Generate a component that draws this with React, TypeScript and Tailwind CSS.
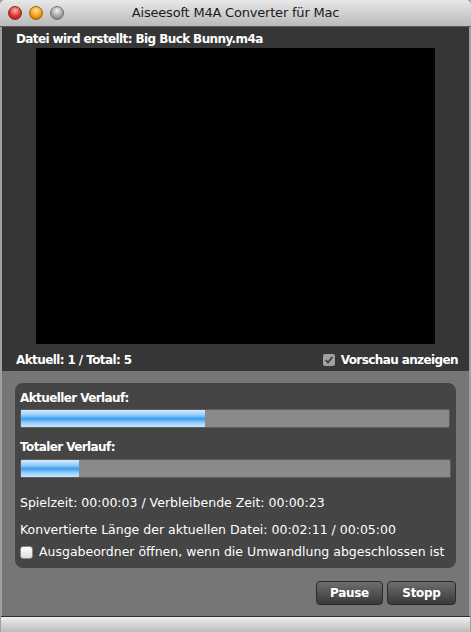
import React from "react";

const font = { fontFamily: '"Lucida Grande", "DejaVu Sans", sans-serif' };

const Bar = ({ pct }: { pct: number }) => (
  <div className="h-[19px] w-full rounded-[2px] bg-[#8a8a8a] border border-[#5e5e5e] overflow-hidden">
    <div
      className="h-full bg-[linear-gradient(to_bottom,#d4ebff_0%,#96cefc_30%,#3a9cf0_52%,#96cefc_75%,#cce6fe_100%)]"
      style={{ width: `${pct}%` }}
    />
  </div>
);

export default function App() {
  return (
    <div className="w-[471px] h-[632px] flex flex-col bg-[#a0a0a0] text-white text-[12px] font-bold tracking-[-0.6px] select-none" style={font}>
      {/* title bar */}
      <div className="h-[27px] shrink-0 relative flex items-center justify-center bg-gradient-to-b from-[#e8e8e8] to-[#bababa] border-b border-[#5a5a5a] rounded-t-[5px]">
        <div className="absolute left-[8px] top-[6px] flex gap-[7px]">
          <span className="w-[14px] h-[14px] rounded-full bg-[radial-gradient(circle_at_50%_30%,#ffb3a8,#e0302a_55%,#9e1410)] border border-[#8a2a22]" />
          <span className="w-[14px] h-[14px] rounded-full bg-[radial-gradient(circle_at_50%_30%,#ffe2a0,#f39a10_55%,#b56000)] border border-[#9a6010]" />
          <span className="w-[14px] h-[14px] rounded-full bg-[radial-gradient(circle_at_50%_30%,#f2f2f2,#a4a4a4_55%,#6e6e6e)] border border-[#6e6e6e]" />
        </div>
        <span className="text-[13px] font-normal tracking-[-0.2px] text-[#1a1a1a]">Aiseesoft M4A Converter für Mac</span>
      </div>

      {/* preview area */}
      <div className="mx-[2px] bg-[#363636] flex flex-col h-[344px] shrink-0">
        <div className="pl-[14px] pt-[3px] h-[21px]">Datei wird erstellt: Big Buck Bunny.m4a</div>
        <div className="mx-auto w-[399px] h-[296px] bg-black" />
        <div className="flex items-center justify-between pl-[14px] pr-[11px] pt-[5px] h-[27px]">
          <span>Aktuell: 1 / Total: 5</span>
          <span className="flex items-center gap-[6px]">
            <span className="w-[12px] h-[12px] rounded-[2px] bg-[#a0a0a0] flex items-center justify-center">
              <svg viewBox="0 0 12 12" className="w-[10px] h-[10px]">
                <path d="M2 6.2 L4.8 9 L10 2.5" fill="none" stroke="#3a3a3a" strokeWidth="2" />
              </svg>
            </span>
            Vorschau anzeigen
          </span>
        </div>
      </div>

      {/* progress area */}
      <div className="mx-[2px] flex-1 bg-[#767676] px-[13px] pt-[12px] flex flex-col">
        <div className="bg-[#454545] rounded-[8px] px-[5px] pt-[4px] pb-[5px] flex flex-col">
          <div className="h-[22px] flex items-center">Aktueller Verlauf:</div>
          <div className="pr-[1px]"><Bar pct={43} /></div>
          <div className="h-[31px] flex items-end pb-[3px]">Totaler Verlauf:</div>
          <Bar pct={13.5} />
          <div className="h-[40px] flex items-end pb-[5px] font-normal text-[12.5px] tracking-[0px]">Spielzeit: 00:00:03 / Verbleibende Zeit: 00:00:23</div>
          <div className="h-[24px] flex items-center font-normal text-[12.5px] tracking-[0px]">Konvertierte Länge der aktuellen Datei: 00:02:11 / 00:05:00</div>
          <div className="h-[21px] flex items-center gap-[6px] font-normal text-[12.5px] tracking-[0px]">
            <span className="w-[13px] h-[13px] rounded-[3px] bg-gradient-to-b from-white to-[#dcdcdc] border border-[#888]" />
            Ausgabeordner öffnen, wenn die Umwandlung abgeschlossen ist
          </div>
        </div>
        <div className="flex justify-end gap-[4px] mt-[13px]">
          <button className="w-[67px] h-[24px] rounded-[4px] border border-[#2a2a2a] bg-gradient-to-b from-[#6e6e6e] to-[#3a3a3a] text-white font-bold text-[12px] tracking-[-0.3px]">Pause</button>
          <button className="w-[69px] h-[24px] rounded-[4px] border border-[#2a2a2a] bg-gradient-to-b from-[#6e6e6e] to-[#3a3a3a] text-white font-bold text-[12px] tracking-[-0.3px]">Stopp</button>
        </div>
      </div>

      {/* bottom bar */}
      <div className="h-[16px] shrink-0 mx-[1px] border-t border-[#2e2e2e] bg-gradient-to-b from-[#eeeeee] to-[#bdbdbd]" />
    </div>
  );
}
